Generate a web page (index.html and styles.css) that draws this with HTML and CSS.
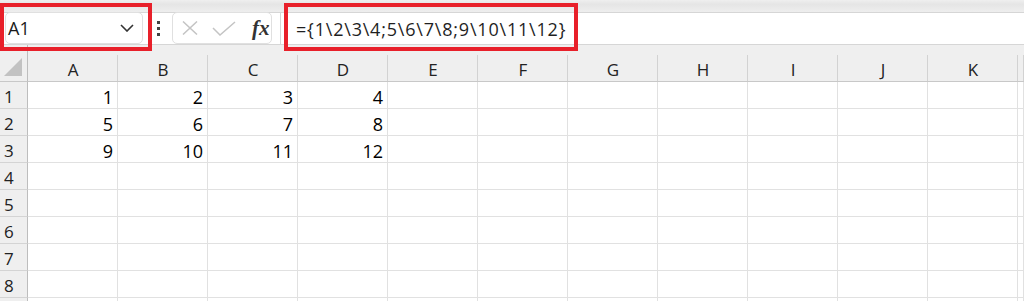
FILE: index.html
```html
<!DOCTYPE html>
<html lang="en">

<head>
    <meta charset="UTF-8">
    <title>Sheet</title>
    <link rel="stylesheet" href="styles.css">
</head>

<body>
    <div class="band"></div>

    <div class="fbar">
        <div class="namebox">
            <span>A1</span>
            <svg width="14" height="8" viewBox="0 0 14 8"><polyline points="1,1 7,7 13,1" fill="none" stroke="#333" stroke-width="1.6"/></svg>
        </div>
        <div class="grip"><i></i><i></i><i></i></div>
        <div class="fbtns">
            <svg width="16" height="14" viewBox="0 0 16 14"><path d="M1 0.5 L15 13.5 M15 0.5 L1 13.5" stroke="#c4c4c4" stroke-width="1.5"/></svg>
            <svg width="24" height="15" viewBox="0 0 24 15"><polyline points="1,7 8,14 23,1" fill="none" stroke="#c4c4c4" stroke-width="1.5"/></svg>
            <span class="fx">fx</span>
        </div>
        <div class="formula">={1\2\3\4;5\6\7\8;9\10\11\12}</div>

        <div class="mark mark-name"></div>
        <div class="mark mark-formula"></div>
    </div>

    <div class="sheet">
        <div class="corner"><svg width="20" height="20" viewBox="0 0 20 20"><polygon points="1,19 19,1 19,19" fill="#c2c2c2"/></svg></div>
        <div class="ch">A</div><div class="ch">B</div><div class="ch">C</div><div class="ch">D</div><div class="ch">E</div><div class="ch">F</div><div class="ch">G</div><div class="ch">H</div><div class="ch">I</div><div class="ch">J</div><div class="ch">K</div><div class="ch"></div>

        <div class="rh">1</div><div class="c">1</div><div class="c">2</div><div class="c">3</div><div class="c">4</div><div class="c"></div><div class="c"></div><div class="c"></div><div class="c"></div><div class="c"></div><div class="c"></div><div class="c"></div><div class="c"></div>
        <div class="rh">2</div><div class="c">5</div><div class="c">6</div><div class="c">7</div><div class="c">8</div><div class="c"></div><div class="c"></div><div class="c"></div><div class="c"></div><div class="c"></div><div class="c"></div><div class="c"></div><div class="c"></div>
        <div class="rh">3</div><div class="c">9</div><div class="c">10</div><div class="c">11</div><div class="c">12</div><div class="c"></div><div class="c"></div><div class="c"></div><div class="c"></div><div class="c"></div><div class="c"></div><div class="c"></div><div class="c"></div>
        <div class="rh">4</div><div class="c"></div><div class="c"></div><div class="c"></div><div class="c"></div><div class="c"></div><div class="c"></div><div class="c"></div><div class="c"></div><div class="c"></div><div class="c"></div><div class="c"></div><div class="c"></div>
        <div class="rh">5</div><div class="c"></div><div class="c"></div><div class="c"></div><div class="c"></div><div class="c"></div><div class="c"></div><div class="c"></div><div class="c"></div><div class="c"></div><div class="c"></div><div class="c"></div><div class="c"></div>
        <div class="rh">6</div><div class="c"></div><div class="c"></div><div class="c"></div><div class="c"></div><div class="c"></div><div class="c"></div><div class="c"></div><div class="c"></div><div class="c"></div><div class="c"></div><div class="c"></div><div class="c"></div>
        <div class="rh">7</div><div class="c"></div><div class="c"></div><div class="c"></div><div class="c"></div><div class="c"></div><div class="c"></div><div class="c"></div><div class="c"></div><div class="c"></div><div class="c"></div><div class="c"></div><div class="c"></div>
        <div class="rh">8</div><div class="c"></div><div class="c"></div><div class="c"></div><div class="c"></div><div class="c"></div><div class="c"></div><div class="c"></div><div class="c"></div><div class="c"></div><div class="c"></div><div class="c"></div><div class="c"></div>
        <div class="rh"></div><div class="c"></div><div class="c"></div><div class="c"></div><div class="c"></div><div class="c"></div><div class="c"></div><div class="c"></div><div class="c"></div><div class="c"></div><div class="c"></div><div class="c"></div><div class="c"></div>
    </div>
</body>

</html>
```

FILE: styles.css
```css
* {
    box-sizing: border-box;
}

body {
    margin: 0;
    font-family: 'Open Sans', sans-serif;
    color: #1f1f1f;
    background: #fff;
    overflow: hidden;
}

.band {
    height: 13px;
    background: linear-gradient(#efefef, #e5e5e5 35%, #eeeeee);
    border-bottom: 1px solid #d6d6d6;
}

.fbar {
    position: relative;
    display: flex;
    align-items: center;
    height: 32px;
    border-bottom: 1px solid #d6d6d6;
}

.namebox {
    display: flex;
    align-items: center;
    justify-content: space-between;
    margin-left: 5px;
    width: 138px;
    height: 32px;
    margin-top: -1px;
    padding: 0 8px 0 2px;
    border: 1px solid #e0e0e0;
    border-radius: 5px;
    font-size: 18px;
    color: #1a1a1a;
}

.grip {
    display: flex;
    flex-direction: column;
    gap: 3px;
    margin-left: 14px;
}

.grip i {
    width: 3px;
    height: 3px;
    background: #444;
}

.fbtns {
    display: flex;
    align-items: center;
    margin-left: 12px;
    width: 100px;
    height: 32px;
    margin-top: -1px;
    padding-left: 9px;
    border: 1px solid #e0e0e0;
    border-radius: 5px;
}

.fbtns svg:nth-child(2) {
    margin-left: 14px;
}

.fx {
    margin-left: 16px;
    font-family: 'Liberation Serif', serif;
    font-style: italic;
    font-weight: bold;
    font-size: 21px;
    color: #333;
}

.formula {
    flex: 1;
    align-self: stretch;
    display: flex;
    align-items: center;
    margin-left: 8px;
    padding-left: 15px;
    border-left: 1px solid #d6d6d6;
    font-size: 18px;
    letter-spacing: 0.8px;
}

.mark {
    position: absolute;
    top: -10px;
    height: 48px;
    border: 4px solid #e8202a;
}

.mark-name {
    left: 0;
    width: 152px;
}

.mark-formula {
    left: 284px;
    width: 294px;
}

.sheet {
    display: grid;
    grid-template-columns: 28px repeat(11, 90px) 1fr;
    grid-template-rows: 37px;
    grid-auto-rows: 27px;
    font-size: 18px;
}

.corner {
    display: flex;
    align-items: flex-end;
    justify-content: flex-end;
    padding: 0 4px 4px 0;
    background: #efefef;
    border-right: 1px solid #bdbdbd;
    border-bottom: 1px solid #c8c8c8;
}

.ch {
    display: flex;
    align-items: center;
    justify-content: center;
    padding-top: 12px;
    font-size: 17px;
    color: #222;
    background: linear-gradient(#d2d2d2, #d2d2d2) right bottom / 1px 26px no-repeat, #efefef;
    border-bottom: 1px solid #c8c8c8;
}

.rh {
    display: flex;
    align-items: center;
    padding: 3px 0 0 4px;
    font-size: 17px;
    color: #222;
    background: #efefef;
    border-right: 1px solid #bdbdbd;
    border-bottom: 1px solid #d4d4d4;
}

.c {
    display: flex;
    align-items: center;
    justify-content: flex-end;
    padding: 3px 4px 0 0;
    color: #000;
    border-right: 1px solid #e1e1e1;
    border-bottom: 1px solid #e1e1e1;
}
```
